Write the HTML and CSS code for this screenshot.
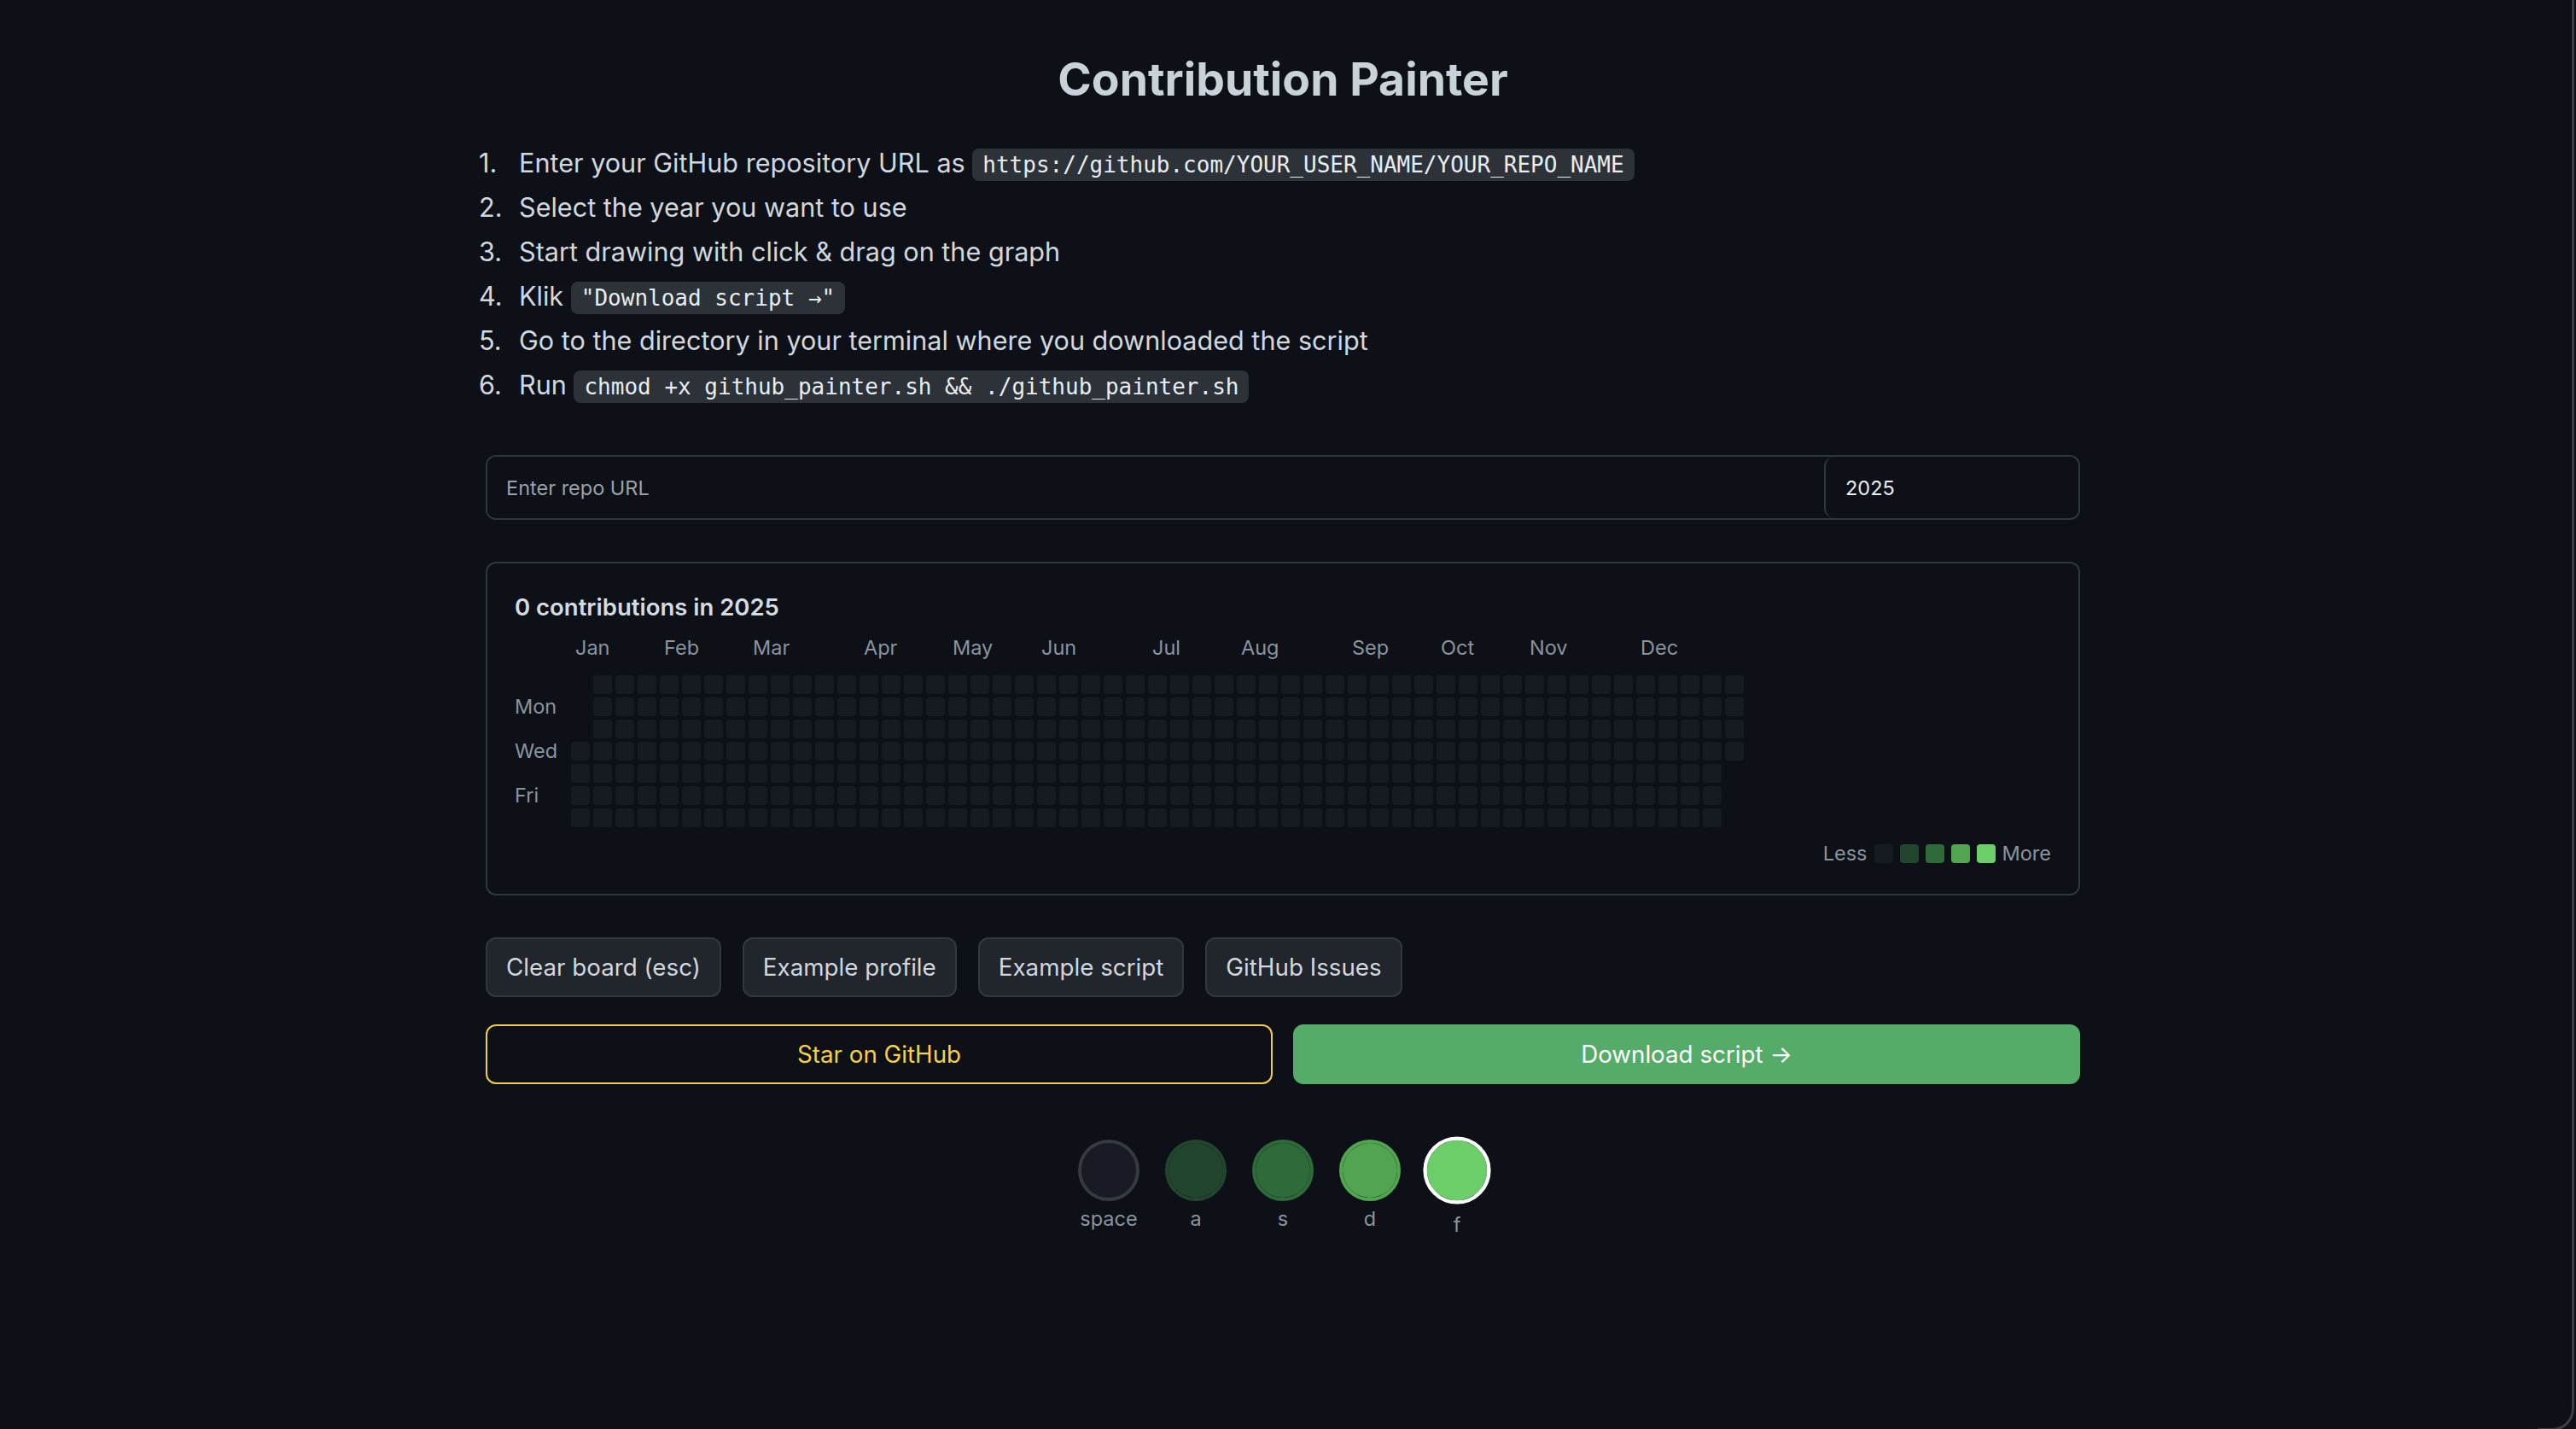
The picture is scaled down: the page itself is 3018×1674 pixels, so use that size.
FILE: index.html
```html
<!DOCTYPE html>
<html lang="en">
<head>
<meta charset="utf-8">
<title>Contribution Painter</title>
<link rel="stylesheet" href="styles.css">
</head>
<body>
<main class="page">
  <h1 class="title">Contribution Painter</h1>
  <ol class="steps">
    <li>Enter your GitHub repository URL as <code class="code">https://github.com/YOUR_USER_NAME/YOUR_REPO_NAME</code></li>
    <li>Select the year you want to use</li>
    <li>Start drawing with click &amp; drag on the graph</li>
    <li>Klik <code class="code">"Download script →"</code></li>
    <li>Go to the directory in your terminal where you downloaded the script</li>
    <li>Run <code class="code">chmod +x github_painter.sh &amp;&amp; ./github_painter.sh</code></li>
  </ol>

  <div class="repo">
    <input class="repo-url" type="text" placeholder="Enter repo URL">
    <input class="repo-year" type="text" value="2025">
  </div>

  <section class="card">
    <h2 class="count">0 contributions in 2025</h2>
    <div class="months">
      <span style="grid-column:1 / span 4">Jan</span>
      <span style="grid-column:5 / span 4">Feb</span>
      <span style="grid-column:9 / span 4">Mar</span>
      <span style="grid-column:14 / span 4">Apr</span>
      <span style="grid-column:18 / span 4">May</span>
      <span style="grid-column:22 / span 4">Jun</span>
      <span style="grid-column:27 / span 4">Jul</span>
      <span style="grid-column:31 / span 4">Aug</span>
      <span style="grid-column:36 / span 4">Sep</span>
      <span style="grid-column:40 / span 4">Oct</span>
      <span style="grid-column:44 / span 4">Nov</span>
      <span style="grid-column:49 / span 4">Dec</span>
    </div>
    <div class="graph">
      <div class="days">
        <span class="d-mon">Mon</span>
        <span class="d-wed">Wed</span>
        <span class="d-fri">Fri</span>
      </div>
      <div class="cells">
<i></i><i></i><i></i><i></i><i></i><i></i><i></i><i></i><i></i><i></i>
<i></i><i></i><i></i><i></i><i></i><i></i><i></i><i></i><i></i><i></i>
<i></i><i></i><i></i><i></i><i></i><i></i><i></i><i></i><i></i><i></i>
<i></i><i></i><i></i><i></i><i></i><i></i><i></i><i></i><i></i><i></i>
<i></i><i></i><i></i><i></i><i></i><i></i><i></i><i></i><i></i><i></i>
<i></i><i></i><i></i><i></i><i></i><i></i><i></i><i></i><i></i><i></i>
<i></i><i></i><i></i><i></i><i></i><i></i><i></i><i></i><i></i><i></i>
<i></i><i></i><i></i><i></i><i></i><i></i><i></i><i></i><i></i><i></i>
<i></i><i></i><i></i><i></i><i></i><i></i><i></i><i></i><i></i><i></i>
<i></i><i></i><i></i><i></i><i></i><i></i><i></i><i></i><i></i><i></i>
<i></i><i></i><i></i><i></i><i></i><i></i><i></i><i></i><i></i><i></i>
<i></i><i></i><i></i><i></i><i></i><i></i><i></i><i></i><i></i><i></i>
<i></i><i></i><i></i><i></i><i></i><i></i><i></i><i></i><i></i><i></i>
<i></i><i></i><i></i><i></i><i></i><i></i><i></i><i></i><i></i><i></i>
<i></i><i></i><i></i><i></i><i></i><i></i><i></i><i></i><i></i><i></i>
<i></i><i></i><i></i><i></i><i></i><i></i><i></i><i></i><i></i><i></i>
<i></i><i></i><i></i><i></i><i></i><i></i><i></i><i></i><i></i><i></i>
<i></i><i></i><i></i><i></i><i></i><i></i><i></i><i></i><i></i><i></i>
<i></i><i></i><i></i><i></i><i></i><i></i><i></i><i></i><i></i><i></i>
<i></i><i></i><i></i><i></i><i></i><i></i><i></i><i></i><i></i><i></i>
<i></i><i></i><i></i><i></i><i></i><i></i><i></i><i></i><i></i><i></i>
<i></i><i></i><i></i><i></i><i></i><i></i><i></i><i></i><i></i><i></i>
<i></i><i></i><i></i><i></i><i></i><i></i><i></i><i></i><i></i><i></i>
<i></i><i></i><i></i><i></i><i></i><i></i><i></i><i></i><i></i><i></i>
<i></i><i></i><i></i><i></i><i></i><i></i><i></i><i></i><i></i><i></i>
<i></i><i></i><i></i><i></i><i></i><i></i><i></i><i></i><i></i><i></i>
<i></i><i></i><i></i><i></i><i></i><i></i><i></i><i></i><i></i><i></i>
<i></i><i></i><i></i><i></i><i></i><i></i><i></i><i></i><i></i><i></i>
<i></i><i></i><i></i><i></i><i></i><i></i><i></i><i></i><i></i><i></i>
<i></i><i></i><i></i><i></i><i></i><i></i><i></i><i></i><i></i><i></i>
<i></i><i></i><i></i><i></i><i></i><i></i><i></i><i></i><i></i><i></i>
<i></i><i></i><i></i><i></i><i></i><i></i><i></i><i></i><i></i><i></i>
<i></i><i></i><i></i><i></i><i></i><i></i><i></i><i></i><i></i><i></i>
<i></i><i></i><i></i><i></i><i></i><i></i><i></i><i></i><i></i><i></i>
<i></i><i></i><i></i><i></i><i></i><i></i><i></i><i></i><i></i><i></i>
<i></i><i></i><i></i><i></i><i></i><i></i><i></i><i></i><i></i><i></i>
<i></i><i></i><i></i><i></i><i></i>
      </div>
    </div>
    <div class="legend">
      <span>Less</span>
      <i class="lv0"></i><i class="lv1"></i><i class="lv2"></i><i class="lv3"></i><i class="lv4"></i>
      <span>More</span>
    </div>
  </section>

  <div class="actions">
    <button class="btn">Clear board (esc)</button>
    <button class="btn">Example profile</button>
    <button class="btn">Example script</button>
    <button class="btn">GitHub Issues</button>
  </div>

  <div class="cta">
    <button class="big star">Star on GitHub</button>
    <button class="big download">Download script →</button>
  </div>

  <div class="palette">
    <div class="swatch"><span class="dot lv0"></span><span class="key">space</span></div>
    <div class="swatch"><span class="dot lv1"></span><span class="key">a</span></div>
    <div class="swatch"><span class="dot lv2"></span><span class="key">s</span></div>
    <div class="swatch"><span class="dot lv3"></span><span class="key">d</span></div>
    <div class="swatch selected"><span class="dot lv4"></span><span class="key">f</span></div>
  </div>
</main>
</body>
</html>
```

FILE: styles.css
```css
* { box-sizing: border-box; }

html, body { margin: 0; }

body {
  background: #0d1117;
  color: #c9d1d9;
  font-family: Inter, "Noto Sans", sans-serif;
  padding: 61px 12px 0 0;
  min-height: 100vh;
}

/* window edge */
body::after {
  content: "";
  position: fixed;
  top: -30px;
  right: 2px;
  bottom: -2px;
  width: 40px;
  border-right: 3px solid #3b3e44;
  border-bottom: 3px solid #3b3e44;
  border-bottom-right-radius: 26px;
  pointer-events: none;
}

.page {
  width: 1868px;
  margin: 0 auto;
}

.title {
  margin: 0;
  font-size: 53.5px;
  line-height: 64px;
  font-weight: 700;
  text-align: center;
  color: #c9d1d9;
}

.steps {
  list-style: none;
  counter-reset: step;
  margin: 40px 0 0 -8px;
  padding: 0;
  font-size: 30.6px;
  line-height: 52px;
  color: #d1d7de;
}

.steps li { counter-increment: step; }

.steps li::before {
  content: counter(step) ".";
  display: inline-block;
  width: 47px;
}

.code {
  font-family: "DejaVu Sans Mono", "Liberation Mono", monospace;
  font-size: 26px;
  line-height: 1;
  padding: 4px 12px;
  border-radius: 8px;
  background: #2d3239;
  color: #e6edf3;
}

.repo {
  margin-top: 56px;
  display: flex;
  height: 76px;
  border: 2px solid #30363d;
  border-radius: 12px;
  overflow: hidden;
}

.repo input {
  font-family: inherit;
  font-size: 23.5px;
  background: #0d1117;
  border: 0;
  outline: none;
  color: #e6edf3;
  height: 100%;
}

.repo-url {
  flex: 1;
  padding: 0 22px;
}

.repo-url::placeholder { color: #9aa1a9; }

.repo-year {
  width: 298px;
  padding: 0 23px;
  border-left: 2px solid #30363d !important;
  border-radius: 12px;
}

.card {
  margin-top: 49px;
  border: 2px solid #30363d;
  border-radius: 12px;
  padding: 34px 32px 31px;
}

.count {
  margin: 0;
  font-size: 27.5px;
  line-height: 34px;
  font-weight: 600;
  color: #d5dbe1;
}

.months {
  margin: 15px 0 0 66px;
  display: grid;
  grid-template-columns: repeat(53, 22px);
  column-gap: 4px;
  font-size: 23.5px;
  line-height: 32px;
  color: #8b949e;
}

.months span {
  grid-row: 1;
  padding-left: 5px;
  white-space: nowrap;
}

.graph {
  margin-top: 16px;
  display: flex;
}

.days {
  width: 66px;
  display: grid;
  grid-template-rows: repeat(7, 22px);
  row-gap: 4px;
  font-size: 23.5px;
  line-height: 22px;
  color: #8b949e;
}

.d-mon { grid-row: 2; }
.d-wed { grid-row: 4; }
.d-fri { grid-row: 6; }

.cells {
  display: grid;
  grid-template-rows: repeat(7, 22px);
  grid-auto-flow: column;
  grid-auto-columns: 22px;
  gap: 4px;
}

.cells i {
  background: #161b22;
  border-radius: 4px;
}

.cells i:first-child { grid-row-start: 4; }

.legend {
  margin-top: 15px;
  display: flex;
  justify-content: flex-end;
  align-items: center;
  gap: 8px;
  font-size: 23.5px;
  line-height: 32px;
  color: #8b949e;
}

.legend i {
  width: 22px;
  height: 22px;
  border-radius: 4px;
}

.lv0 { background: #161b22; }
.lv1 { background: #21462d; }
.lv2 { background: #2e6a3a; }
.lv3 { background: #51a551; }
.lv4 { background: #6cce68; }

.actions {
  margin-top: 49px;
  display: flex;
  gap: 25px;
}

.btn {
  font-family: inherit;
  font-size: 27.75px;
  line-height: 40px;
  padding: 13px 22px;
  border: 2px solid #33383f;
  border-radius: 12px;
  background: #21262d;
  color: #d1d7de;
}

.cta {
  margin-top: 32px;
  display: grid;
  grid-template-columns: 1fr 1fr;
  gap: 24px;
}

.big {
  font-family: inherit;
  font-size: 27.75px;
  line-height: 40px;
  padding: 13px 22px;
  border-radius: 12px;
  border: 2px solid transparent;
}

.star {
  background: transparent;
  border-color: #f0cd4a;
  color: #f5d04a;
}

.download {
  background: #55ab68;
  border-color: #55ab68;
  color: #ffffff;
}

.palette {
  margin-top: 65px;
  display: flex;
  justify-content: center;
  gap: 30px;
}

.swatch {
  width: 72px;
  display: flex;
  flex-direction: column;
  align-items: center;
}

.dot {
  width: 72px;
  height: 72px;
  border-radius: 50%;
  border: 4px solid transparent;
  background-clip: padding-box;
}

.dot.lv0 {
  background: #181b23;
  border-color: #363a40;
}

.dot.lv1, .dot.lv2, .dot.lv3 { border-color: currentColor; }
.dot.lv1 { color: #21462d; }
.dot.lv2 { color: #2e6a3a; }
.dot.lv3 { color: #51a551; }

.selected .dot {
  border-color: #ffffff;
  transform: scale(1.1);
}

.key {
  margin-top: 5px;
  font-size: 23.5px;
  line-height: 32px;
  color: #8b949e;
}

.selected .key { margin-top: 12px; }
```
